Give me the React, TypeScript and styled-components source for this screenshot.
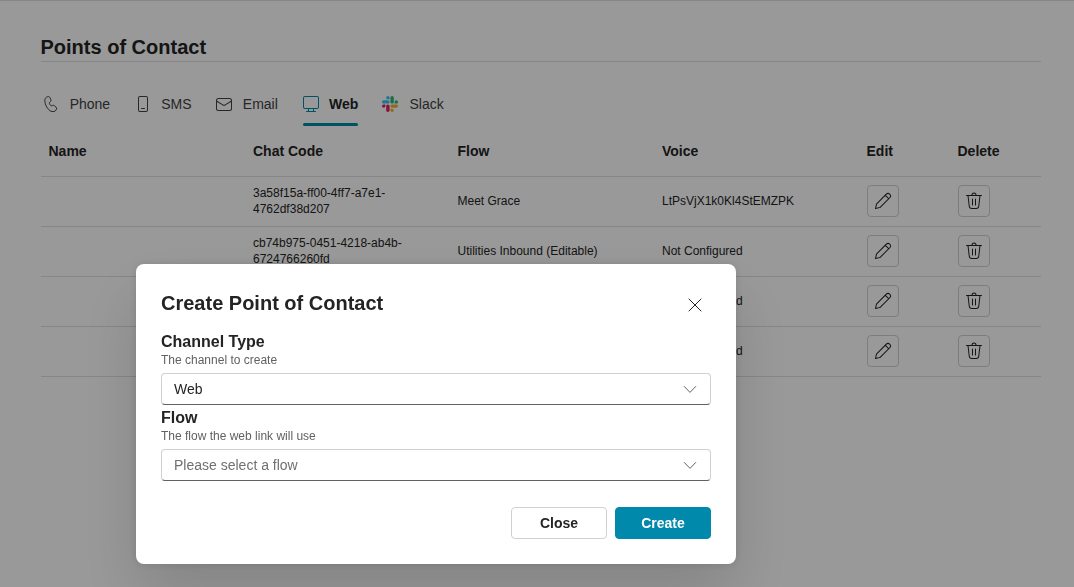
import React from "react";
import styled, { createGlobalStyle } from "styled-components";

const GlobalStyle = createGlobalStyle`
  *, *::before, *::after { box-sizing: border-box; }
  body {
    margin: 0;
    background: #fff;
    color: #242424;
    font-family: "Liberation Sans", Arial, sans-serif;
    font-size: 14px;
    line-height: 20px;
  }
  button, select { font: inherit; color: inherit; }
`;

const Page = styled.main`
  border-top: 1px solid #e0e0e0;
  padding: 32px 0 32px 7px;
`;

const Content = styled.div`
  max-width: 1000px;
  margin: 0 auto;
`;

const PageTitle = styled.h1`
  margin: 0;
  border-bottom: 1px solid #e0e0e0;
  font-size: 20px;
  font-weight: 700;
  line-height: 28px;
`;

const TabList = styled.div`
  display: flex;
  margin: 20px 0 0 -10px;
`;

const TabButton = styled.button<{ $active?: boolean }>`
  position: relative;
  display: flex;
  align-items: center;
  gap: 6px;
  padding: 12px 10px;
  border: 0;
  background: none;
  color: ${(p) => (p.$active ? "#242424" : "#424242")};
  font-weight: ${(p) => (p.$active ? 700 : 400)};

  svg { color: ${(p) => (p.$active ? "#0089ab" : "inherit")}; }

  &::after {
    content: "";
    display: ${(p) => (p.$active ? "block" : "none")};
    position: absolute;
    left: 12px;
    right: 12px;
    bottom: 0;
    height: 3px;
    border-radius: 3px;
    background: #0089ab;
  }
`;

const TabLabel = styled.span`
  display: grid;
  justify-items: center;
  padding: 0 2px;

  &::after {
    content: attr(data-label);
    height: 0;
    overflow: hidden;
    visibility: hidden;
    font-weight: 700;
  }
`;

const Icon = styled.svg`
  display: block;
  width: 20px;
  height: 20px;
  fill: currentColor;
  flex: none;
`;

const Table = styled.table`
  width: 100%;
  table-layout: fixed;
  border-collapse: collapse;
`;

const HeaderCell = styled.th<{ $narrow?: boolean }>`
  width: ${(p) => (p.$narrow ? "91px" : "auto")};
  height: 50px;
  padding: 0 8px;
  border-bottom: 1px solid #e0e0e0;
  text-align: left;
`;

const Cell = styled.td`
  height: 50px;
  padding: 0 8px;
  border-bottom: 1px solid #e0e0e0;
  font-size: 12px;
  line-height: 16px;
`;

const IconButton = styled.button`
  display: flex;
  align-items: center;
  justify-content: center;
  width: 32px;
  height: 32px;
  padding: 0;
  border: 1px solid #d1d1d1;
  border-radius: 4px;
  background: transparent;
`;

const Overlay = styled.div`
  position: fixed;
  inset: 0;
  display: flex;
  align-items: flex-start;
  padding: 264px 24px 0 136px;
  background: rgba(0, 0, 0, 0.4);
`;

const Dialog = styled.div`
  flex: 0 1 600px;
  padding: 25px;
  border-radius: 8px;
  background: #fff;
  box-shadow: 0 0 8px rgba(0, 0, 0, 0.12), 0 32px 64px rgba(0, 0, 0, 0.14);
`;

const DialogHeader = styled.header`
  display: flex;
  align-items: flex-start;
  justify-content: space-between;
  margin-bottom: 8px;
`;

const DialogTitle = styled.h2`
  margin: 0;
  font-size: 20px;
  font-weight: 700;
  line-height: 28px;
`;

const DismissButton = styled.button`
  display: flex;
  align-items: center;
  justify-content: center;
  width: 32px;
  height: 32px;
  padding: 0;
  border: 0;
  background: none;
`;

const Field = styled.div`
  display: flex;
  flex-direction: column;
  padding-top: 2px;
`;

const FieldLabel = styled.label`
  font-size: 16px;
  font-weight: 700;
  line-height: 22px;
`;

const FieldHint = styled.span`
  margin-bottom: 6px;
  color: #616161;
  font-size: 12px;
  line-height: 14px;
`;

const SelectBox = styled.div`
  display: grid;
  align-items: center;

  > * { grid-area: 1 / 1; }

  svg {
    justify-self: end;
    margin-right: 11px;
    color: #616161;
    pointer-events: none;
  }
`;

const Select = styled.select<{ $placeholder?: boolean }>`
  appearance: none;
  width: 100%;
  height: 32px;
  padding: 0 36px 0 12px;
  border: 1px solid #d1d1d1;
  border-bottom-color: #616161;
  border-radius: 4px;
  background: #fff;
  color: ${(p) => (p.$placeholder ? "#707070" : "#242424")};
`;

const Actions = styled.footer`
  display: flex;
  justify-content: flex-end;
  gap: 8px;
  margin-top: 26px;
`;

const ActionButton = styled.button<{ $primary?: boolean }>`
  min-width: 96px;
  height: 32px;
  padding: 0 12px;
  border: 1px solid ${(p) => (p.$primary ? "#0089ab" : "#d1d1d1")};
  border-radius: 4px;
  background: ${(p) => (p.$primary ? "#0089ab" : "#fff")};
  color: ${(p) => (p.$primary ? "#fff" : "#242424")};
  font-weight: 700;
`;

const EditIcon = () => (
  <Icon viewBox="0 0 20 20" aria-hidden="true">
    <path d="M17.18 2.93a2.97 2.97 0 0 0-4.26-.06l-9.37 9.38c-.33.33-.56.74-.66 1.2l-.88 3.94a.5.5 0 0 0 .6.6l3.92-.87c.46-.1.9-.34 1.23-.68l9.36-9.36a2.97 2.97 0 0 0 .06-4.15Zm-3.55.65a1.97 1.97 0 1 1 2.8 2.8l-.68.66-2.8-2.79.68-.67Zm-1.38 1.38 2.8 2.8-7.99 7.97c-.2.2-.46.35-.74.41l-3.16.7.7-3.18c.07-.27.2-.51.4-.7l8-8Z" />
  </Icon>
);

const DeleteIcon = () => (
  <Icon viewBox="0 0 20 20" aria-hidden="true">
    <path d="M8.5 4h3a1.5 1.5 0 0 0-3 0Zm-1 0a2.5 2.5 0 0 1 5 0h5a.5.5 0 0 1 0 1h-1.05l-1.2 10.34A3 3 0 0 1 12.27 18H7.73a3 3 0 0 1-2.98-2.66L3.55 5H2.5a.5.5 0 0 1 0-1h5ZM5.74 15.23A2 2 0 0 0 7.73 17h4.54a2 2 0 0 0 1.99-1.77L15.44 5H4.56l1.18 10.23ZM8.5 7.5c.28 0 .5.22.5.5v6a.5.5 0 0 1-1 0V8c0-.28.22-.5.5-.5ZM12 8a.5.5 0 0 0-1 0v6a.5.5 0 0 0 1 0V8Z" />
  </Icon>
);

const PhoneIcon = () => (
  <Icon viewBox="0 0 20 20" aria-hidden="true">
    <path
      d="M7.1 2.6l-.9.3C5.100 3.200 4.200 4.100 4 5.200c-.5 2.700.3 5.600 2.200 8.500 1.900 2.900 4 4.400 6.700 3.800 1-.2 1.900-.8 2.300-1.700l.3-.7c.3-.7.1-1.400-.4-1.900l-1.600-1.400c-.5-.5-1.200-.6-1.800-.4l-1.500.5c-.9-.6-1.800-2.100-1.900-3.200l1.200-1.100c.5-.4.7-1.100.4-1.700l-.8-2C8.700 3 7.900 2.400 7.100 2.600Z"
      fill="none"
      stroke="currentColor"
    />
  </Icon>
);

const SmsIcon = () => (
  <Icon viewBox="0 0 20 20" aria-hidden="true">
    <path d="M13 2a2 2 0 0 1 2 2v12a2 2 0 0 1-2 2H7a2 2 0 0 1-2-2V4c0-1.100.9-2 2-2h6Zm0 1H7a1 1 0 0 0-1 1v12a1 1 0 0 0 1 1h6a1 1 0 0 0 1-1V4a1 1 0 0 0-1-1Zm-1.500 11a.5.5 0 0 1 .09 1H8.500a.5.5 0 0 1-.09-1h3.090Z" />
  </Icon>
);

const MailIcon = () => (
  <Icon viewBox="0 0 20 20" aria-hidden="true">
    <path d="M15.5 4A2.5 2.5 0 0 1 18 6.5v8a2.5 2.5 0 0 1-2.5 2.5h-11A2.5 2.5 0 0 1 2 14.5v-8A2.5 2.5 0 0 1 4.5 4h11ZM17 7.96l-6.75 3.97a.5.5 0 0 1-.42.04l-.08-.04L3 7.96v6.54c0 .83.67 1.5 1.5 1.5h11c.83 0 1.5-.67 1.5-1.5V7.96ZM15.5 5h-11C3.67 5 3 5.67 3 6.5v.3l7 4.12 7-4.12v-.3c0-.83-.67-1.5-1.5-1.5Z" />
  </Icon>
);

const WebIcon = () => (
  <Icon viewBox="0 0 20 20" aria-hidden="true">
    <path d="M4 2a2 2 0 0 0-2 2v9c0 1.100.9 2 2 2h3v2H5.500a.5.5 0 0 0 0 1h9a.5.5 0 0 0 0-1H13v-2h3a2 2 0 0 0 2-2V4a2 2 0 0 0-2-2H4Zm8 13v2H8v-2h4ZM3 4a1 1 0 0 1 1-1h12a1 1 0 0 1 1 1v9a1 1 0 0 1-1 1H4a1 1 0 0 1-1-1V4Z" />
  </Icon>
);

const SlackIcon = () => (
  <Icon viewBox="-15.400 -15.400 153.600 153.600" aria-hidden="true">
    <path fill="#e01e5a" d="M25.800 77.600c0 7.100-5.800 12.900-12.900 12.900S0 84.700 0 77.600s5.800-12.900 12.900-12.900h12.900v12.900zM32.300 77.600c0-7.100 5.800-12.900 12.900-12.900s12.900 5.800 12.900 12.900v32.300c0 7.100-5.800 12.900-12.900 12.900s-12.900-5.800-12.900-12.900V77.600z" />
    <path fill="#36c5f0" d="M45.200 25.800c-7.100 0-12.900-5.800-12.900-12.900S38.100 0 45.200 0s12.900 5.800 12.900 12.900v12.900H45.200zM45.200 32.300c7.100 0 12.900 5.800 12.900 12.900s-5.800 12.900-12.900 12.900H12.900C5.800 58.100 0 52.300 0 45.200s5.800-12.900 12.900-12.900h32.300z" />
    <path fill="#2eb67d" d="M97 45.200c0-7.100 5.800-12.900 12.900-12.900s12.900 5.800 12.900 12.900-5.800 12.900-12.900 12.900H97V45.200zM90.500 45.200c0 7.100-5.800 12.900-12.900 12.900s-12.900-5.800-12.900-12.900V12.900C64.700 5.800 70.500 0 77.600 0s12.900 5.800 12.900 12.900v32.300z" />
    <path fill="#ecb22e" d="M77.600 97c7.100 0 12.900 5.800 12.900 12.900s-5.800 12.900-12.900 12.900-12.900-5.800-12.900-12.900V97h12.900zM77.600 90.500c-7.100 0-12.900-5.800-12.900-12.900s5.800-12.900 12.900-12.900h32.300c7.100 0 12.900 5.800 12.900 12.900s-5.800 12.900-12.900 12.900H77.600z" />
  </Icon>
);

const DismissIcon = () => (
  <Icon viewBox="0 0 20 20" aria-hidden="true">
    <path d="M4 4l12 12M16 4L4 16" fill="none" stroke="currentColor" strokeLinecap="round" />
  </Icon>
);

const ChevronIcon = () => (
  <Icon viewBox="0 0 20 20" aria-hidden="true">
    <path d="M4.300 7.500l5.700 5.900 5.700-5.900" fill="none" stroke="currentColor" strokeLinecap="round" />
  </Icon>
);

const tabs = [
  { label: "Phone", icon: <PhoneIcon /> },
  { label: "SMS", icon: <SmsIcon /> },
  { label: "Email", icon: <MailIcon /> },
  { label: "Web", icon: <WebIcon />, active: true },
  { label: "Slack", icon: <SlackIcon /> },
];

const rows = [
  { code: "3a58f15a-ff00-4ff7-a7e1-4762df38d207", flow: "Meet Grace", voice: "LtPsVjX1k0Kl4StEMZPK" },
  { code: "cb74b975-0451-4218-ab4b-6724766260fd", flow: "Utilities Inbound (Editable)", voice: "Not Configured" },
  { code: "", flow: "", voice: "Not Configured" },
  { code: "", flow: "", voice: "Not Configured" },
];

export default function App() {
  return (
    <>
      <GlobalStyle />
      <Page>
        <Content>
          <PageTitle>Points of Contact</PageTitle>
          <TabList role="tablist">
            {tabs.map((tab) => (
              <TabButton key={tab.label} type="button" role="tab" aria-selected={!!tab.active} $active={tab.active}>
                {tab.icon}
                <TabLabel data-label={tab.label}>{tab.label}</TabLabel>
              </TabButton>
            ))}
          </TabList>
          <Table>
            <thead>
              <tr>
                <HeaderCell>Name</HeaderCell>
                <HeaderCell>Chat Code</HeaderCell>
                <HeaderCell>Flow</HeaderCell>
                <HeaderCell>Voice</HeaderCell>
                <HeaderCell $narrow>Edit</HeaderCell>
                <HeaderCell $narrow>Delete</HeaderCell>
              </tr>
            </thead>
            <tbody>
              {rows.map((row, i) => (
                <tr key={i}>
                  <Cell />
                  <Cell>{row.code}</Cell>
                  <Cell>{row.flow}</Cell>
                  <Cell>{row.voice}</Cell>
                  <Cell>
                    <IconButton type="button" aria-label="Edit"><EditIcon /></IconButton>
                  </Cell>
                  <Cell>
                    <IconButton type="button" aria-label="Delete"><DeleteIcon /></IconButton>
                  </Cell>
                </tr>
              ))}
            </tbody>
          </Table>
        </Content>
      </Page>
      <Overlay>
        <Dialog role="dialog" aria-modal="true" aria-labelledby="dialog-title">
          <DialogHeader>
            <DialogTitle id="dialog-title">Create Point of Contact</DialogTitle>
            <DismissButton type="button" aria-label="Dismiss"><DismissIcon /></DismissButton>
          </DialogHeader>
          <Field>
            <FieldLabel htmlFor="channel">Channel Type</FieldLabel>
            <FieldHint id="channel-hint">The channel to create</FieldHint>
            <SelectBox>
              <Select id="channel" aria-describedby="channel-hint" defaultValue="web">
                <option value="web">Web</option>
              </Select>
              <ChevronIcon />
            </SelectBox>
          </Field>
          <Field>
            <FieldLabel htmlFor="flow">Flow</FieldLabel>
            <FieldHint id="flow-hint">The flow the web link will use</FieldHint>
            <SelectBox>
              <Select id="flow" aria-describedby="flow-hint" defaultValue="" $placeholder>
                <option value="">Please select a flow</option>
              </Select>
              <ChevronIcon />
            </SelectBox>
          </Field>
          <Actions>
            <ActionButton type="button">Close</ActionButton>
            <ActionButton type="button" $primary>Create</ActionButton>
          </Actions>
        </Dialog>
      </Overlay>
    </>
  );
}
